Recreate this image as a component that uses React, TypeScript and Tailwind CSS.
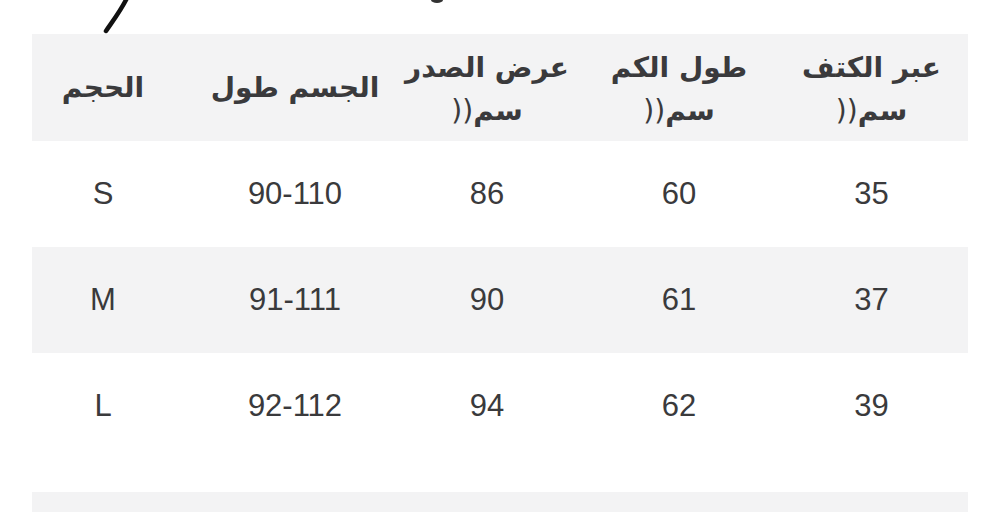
import React from 'react';

const arabic = { fontFamily: '"DejaVu Sans", sans-serif' };
const latin = { fontFamily: '"Liberation Sans", Arial, sans-serif' };

// columns in visual order, left to right
const headers: { title: string; unit?: boolean }[] = [
  { title: 'الحجم' },
  { title: 'الجسم طول' },
  { title: 'عرض الصدر', unit: true },
  { title: 'طول الكم', unit: true },
  { title: 'عبر الكتف', unit: true },
];

const rows = [
  ['S', '90-110', '86', '60', '35'],
  ['M', '91-111', '90', '61', '37'],
  ['L', '92-112', '94', '62', '39'],
];

const cols = 'grid grid-cols-[167px_192px_192px_192px_1fr]';
const PARENS = '\u0029\u0029';
const CM = '\u0633\u0645';

function Cell({ index, children }: { index: number; children: React.ReactNode }) {
  return (
    <div className={`flex flex-col items-center justify-center ${index === 0 ? 'pr-[25px]' : ''}`}>
      {children}
    </div>
  );
}

export default function App() {
  return (
    <div dir="ltr" className="w-[1000px] h-[512px] overflow-hidden bg-white text-[#3a3a3c]">
      {/* pen stroke cut off at the top */}
      <div className="h-[34px] flex">
        <svg width="140" height="34" viewBox="0 0 140 34">
          <path d="M106 31 C 112 22, 120 12, 127 -2" stroke="#111" strokeWidth="4.5" fill="none" strokeLinecap="round" />
        </svg>
        <svg width="30" height="6" viewBox="0 0 30 6" className="ml-[287px]">
          <ellipse cx="10" cy="0" rx="6" ry="3" fill="#333" />
        </svg>
      </div>

      <div className="mx-[32px]">
        <div className={`${cols} h-[107px] bg-[#f3f3f4]`}>
          {headers.map((h, i) => (
            <Cell key={i} index={i}>
              <div style={arabic} className="text-[28px] font-bold leading-[46px] text-[#3a3a3c]" dir="rtl">
                {h.title}
              </div>
              {h.unit && (
                <div dir="ltr" style={arabic} className="flex flex-row text-[28px] font-bold leading-[40px] text-[#3a3a3c]">
                  <span className="font-normal">{PARENS}</span>
                  <span>{CM}</span>
                </div>
              )}
            </Cell>
          ))}
        </div>

        {rows.map((r, ri) => (
          <div key={ri} className={`${cols} h-[106px] ${ri === 1 ? 'bg-[#f3f3f4]' : 'bg-white'}`}>
            {r.map((v, i) => (
              <Cell key={i} index={i}>
                <span style={latin} className="text-[31px] text-[#3a3a3c]">{v}</span>
              </Cell>
            ))}
          </div>
        ))}

        <div className="mt-[33px] h-[40px] bg-[#f3f3f4]" />
      </div>
    </div>
  );
}
